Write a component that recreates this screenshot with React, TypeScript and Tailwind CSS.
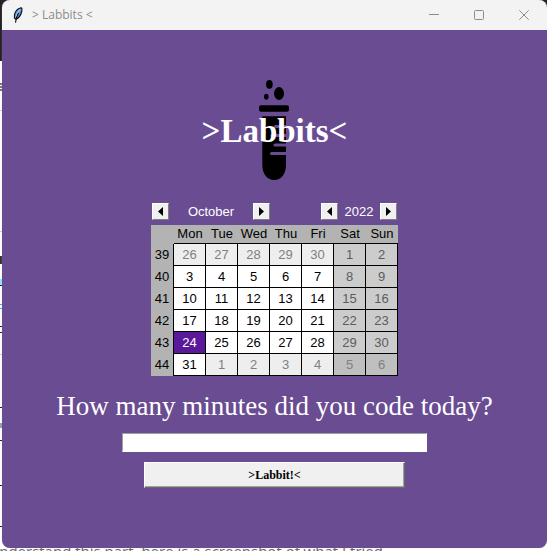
import { useState } from "react";

const sans = "font-['Liberation_Sans',Arial,sans-serif]";
const serif = "font-['Liberation_Serif','Times_New_Roman',serif]";

const days = ["Mon", "Tue", "Wed", "Thu", "Fri", "Sat", "Sun"];

const weeks = [
  { no: 39, dates: [26, 27, 28, 29, 30, 1, 2] },
  { no: 40, dates: [3, 4, 5, 6, 7, 8, 9] },
  { no: 41, dates: [10, 11, 12, 13, 14, 15, 16] },
  { no: 42, dates: [17, 18, 19, 20, 21, 22, 23] },
  { no: 43, dates: [24, 25, 26, 27, 28, 29, 30] },
  { no: 44, dates: [31, 1, 2, 3, 4, 5, 6] },
];

// Slivers of the page behind the window, visible along its left edge.
const slivers = [
  { y: 83, h: 2, color: "#777777" },
  { y: 86, h: 2, color: "#777777" },
  { y: 89, h: 2, color: "#777777" },
  { y: 110, h: 1, color: "#cccccc" },
  { y: 231, h: 1, color: "#cccccc" },
  { y: 256, h: 8, color: "#3a3230" },
  { y: 279, h: 6, color: "#8fe3ff" },
  { y: 285, h: 1, color: "#222222" },
  { y: 304, h: 1, color: "#4aa3e0" },
  { y: 308, h: 1, color: "#4aa3e0" },
  { y: 326, h: 1, color: "#222222" },
  { y: 332, h: 1, color: "#222222" },
  { y: 354, h: 1, color: "#cccccc" },
  { y: 407, h: 1, color: "#222222" },
  { y: 423, h: 5, color: "#8fa3b5" },
  { y: 440, h: 1, color: "#222222" },
  { y: 485, h: 1, color: "#222222" },
  { y: 526, h: 1, color: "#222222" },
];

function cellColors(week: number, date: number, column: number) {
  const otherMonth = (week === 39 && date > 20) || (week === 44 && date < 10);
  const weekend = column > 4;
  if (week === 43 && date === 24) return "bg-[#5a189a] text-white";
  if (otherMonth && weekend) return "bg-[#bfbfbf] text-[#808080]";
  if (otherMonth) return "bg-[#eeeeee] text-[#808080]";
  if (weekend) return "bg-[#cccccc] text-[#5c5c5c]";
  return "bg-white text-black";
}

function Feather() {
  return (
    <svg className="h-4 w-3" viewBox="0 0 12 16" aria-hidden="true">
      <path d="M9 .7C6 1.500 3.300 4 2.500 7.500L2.400 11 3.600 12.200C6.500 11.500 8.800 8.500 9.800 4.500L9.900 1.500Z" fill="#4d8fd6" stroke="#111" strokeWidth="1.100" />
      <path d="M8.300 2.200C6 4.500 4.500 7.500 3.800 10.500" stroke="#a9d0f5" strokeWidth="1.200" fill="none" />
      <path d="M6.500 6C4.800 9 3.900 12 3.500 15.600" stroke="#000" strokeWidth="1.100" fill="none" />
    </svg>
  );
}

function TitleBar() {
  const control = "flex h-full w-[45px] items-center justify-center";
  const stroke = { fill: "none", stroke: "#8c8c8c", strokeWidth: 1 };
  return (
    <header className="flex h-[30px] shrink-0 items-center bg-[#f3f3f3] pl-[10px]">
      <Feather />
      <h2 className="ml-2 flex-1 font-['Open_Sans',sans-serif] text-[12px] leading-4 text-[#8c8c8c]">
        &gt; Labbits &lt;
      </h2>
      <button type="button" aria-label="Minimize" className={control}>
        <svg className="h-[11px] w-[11px]" viewBox="0 0 11 11"><path d="M0 4.500H10" {...stroke} /></svg>
      </button>
      <button type="button" aria-label="Maximize" className={control}>
        <svg className="h-[11px] w-[11px]" viewBox="0 0 11 11"><rect x=".5" y=".5" width="9" height="9" rx="1" {...stroke} /></svg>
      </button>
      <button type="button" aria-label="Close" className={control}>
        <svg className="h-[11px] w-[11px]" viewBox="0 0 11 11"><path d="M.3 .3L9.700 9.700M9.700 .3L.3 9.700" {...stroke} /></svg>
      </button>
    </header>
  );
}

function TestTube() {
  return (
    <svg className="h-[100px] w-[31px]" viewBox="0 0 31 100" aria-hidden="true">
      <ellipse cx="10.400" cy="4.400" rx="3.300" ry="4.400" />
      <ellipse cx="20" cy="13.500" rx="5" ry="6.400" />
      <ellipse cx="7.300" cy="16.800" rx="2.300" ry="3" />
      <rect y="25.300" width="30" height="6.400" rx="2" />
      <path d="M3.300 36.300H27V85C27 94 22 100 15.200 100S3.300 94 3.300 85Z" />
      <g fill="#6a4c93">
        <path d="M27 45H16.500a1.500 1.500 0 0 0 0 3H27Z" />
        <path d="M27 54H13a1.500 1.500 0 0 0 0 3H27Z" />
        <path d="M27 63.500H16a1.500 1.500 0 0 0 0 3H27Z" />
        <path d="M27 72H12.500a1.500 1.500 0 0 0 0 3H27Z" />
      </g>
    </svg>
  );
}

function Arrow({ label, next = false }: { label: string; next?: boolean }) {
  return (
    <button
      type="button"
      aria-label={label}
      className="flex h-[17px] w-[17px] items-center justify-center border border-t-white border-l-white border-r-[#808080] border-b-[#808080] bg-[#f0f0f0]"
    >
      <svg className="h-[9px] w-[5px]" viewBox="0 0 5 9">
        <path d={next ? "M0 0V9L5 4.500Z" : "M5 0V9L0 4.500Z"} />
      </svg>
    </button>
  );
}

function Calendar() {
  return (
    <section aria-label="Calendar" className={`mt-[23px] w-[247px] text-[13px] ${sans}`}>
      <div className="flex justify-between px-px leading-[17px] text-white">
        <div className="flex w-[118px] items-center justify-between">
          <Arrow label="Previous month" />
          <span>October</span>
          <Arrow label="Next month" next />
        </div>
        <div className="flex w-[76px] items-center justify-between">
          <Arrow label="Previous year" />
          <span>2022</span>
          <Arrow label="Next year" next />
        </div>
      </div>
      <table className="mt-[5px] w-full table-fixed border-separate border-spacing-0 bg-[#b3b3b3] text-center leading-[18px]">
        <thead>
          <tr>
            <th className="w-[23px] p-0" />
            {days.map((d) => (
              <th key={d} scope="col" className="h-[19px] border-b border-black p-0 font-normal">{d}</th>
            ))}
          </tr>
        </thead>
        <tbody>
          {weeks.map((w) => (
            <tr key={w.no}>
              <th scope="row" className="h-[22px] border-r border-black p-0 font-normal">{w.no}</th>
              {w.dates.map((date, i) => (
                <td key={i} className={`h-[22px] border-r border-b border-black p-0 ${cellColors(w.no, date, i)}`}>
                  {date}
                </td>
              ))}
            </tr>
          ))}
        </tbody>
      </table>
    </section>
  );
}

export default function App() {
  const [minutes, setMinutes] = useState("");
  return (
    <div className="relative h-screen overflow-hidden bg-white pb-[3px] pl-[2px]">
      <div className="absolute inset-x-0 top-0 h-[61px] bg-[#222222]" />
      <svg className="absolute top-0 left-0 h-[551px] w-[2px]" viewBox="0 0 2 551" aria-hidden="true">
        {slivers.map((s) => (
          <rect key={s.y} y={s.y} width="2" height={s.h} fill={s.color} />
        ))}
      </svg>
      <p className="absolute bottom-0 -left-[10px] h-[10px] whitespace-nowrap font-['Open_Sans',sans-serif] text-[15px] leading-5 text-[#666]">
        understand this part, here is a screenshot of what I tried
      </p>
      <div className="relative flex h-full flex-col overflow-hidden rounded-lg bg-[#6a4c93] shadow-[0_0_1px_0_#b5b5b5]">
        <TitleBar />
        <main className="flex flex-1 flex-col items-center pt-[50px]">
          <div className="relative">
            <TestTube />
            <div className="absolute inset-0 flex items-center justify-center pt-[2px]">
              <h1 className={`whitespace-nowrap text-[33px] leading-10 font-bold text-white ${serif}`}>&gt;Labbits&lt;</h1>
            </div>
          </div>
          <Calendar />
          <label htmlFor="minutes" className={`mt-[14px] text-[27px] leading-8 text-white ${serif}`}>
            How many minutes did you code today?
          </label>
          <input
            id="minutes"
            value={minutes}
            onChange={(e) => setMinutes(e.target.value)}
            className={`mt-[11px] h-[19px] w-[305px] border border-t-[#a0a0a0] border-r-white border-b-white border-l-[#a0a0a0] bg-white px-1 text-[12px] outline-none ${serif}`}
          />
          <button
            type="button"
            className={`mt-[10px] h-[26px] w-[261px] border border-t-white border-r-[#696969] border-b-[#696969] border-l-white bg-[#f0f0f0] text-[12px] font-bold text-black shadow-[inset_-1px_-1px_0_#a0a0a0] ${serif}`}
          >
            &gt;Labbit!&lt;
          </button>
        </main>
      </div>
    </div>
  );
}
